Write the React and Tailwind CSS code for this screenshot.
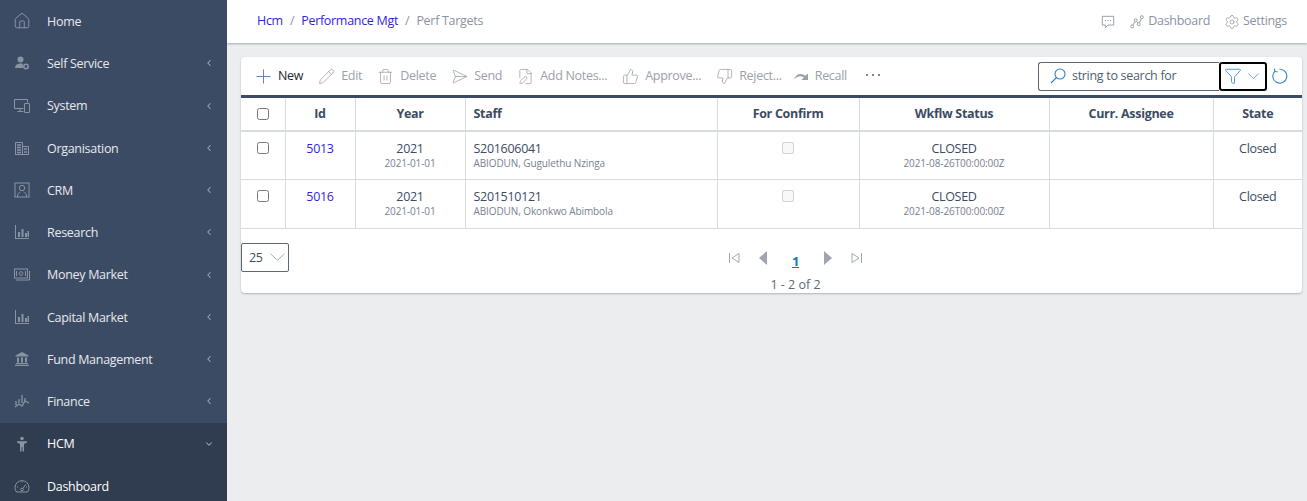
import { Pencil, Trash2, SendHorizontal, FilePen, ThumbsUp, ThumbsDown, Funnel, ChevronLeft, Settings, Home } from 'lucide-react'

function UserGear(props) {
  return (
    <svg viewBox="0 0 16 16" fill="currentColor" {...props}>
      <circle cx="6.500" cy="4.500" r="3"/>
      <path d="M1 13c0-3 2-4.500 5.500-4.500 1 0 1.700.1 2.300.4v4.100z"/>
      <circle cx="12" cy="11.500" r="2.200" fill="none" stroke="currentColor" strokeWidth="1.600"/>
    </svg>
  )
}

function Devices(props) {
  return (
    <svg viewBox="0 0 16 16" fill="none" stroke="currentColor" strokeWidth="1" {...props}>
      <path d="M9.500 10.500H.5v-9h13v3"/>
      <path d="M6 10.500v3M3.500 13.500h6"/>
      <rect x="10.500" y="5.500" width="5" height="9" rx=".5"/>
    </svg>
  )
}

function Building(props) {
  return (
    <svg viewBox="0 0 16 16" fill="none" stroke="currentColor" {...props}>
      <path d="M1.500 14.500V2.500h7v12zM8.500 6.500h6v8h-6M1 14.500h14" strokeWidth="1"/>
      <path d="M3 5h4M3 7.500h4M3 10h4M3 12.500h4M10 9h3M10 12h3" strokeWidth="1.300"/>
    </svg>
  )
}

function Contact(props) {
  return (
    <svg viewBox="0 0 16 16" fill="none" stroke="currentColor" strokeWidth="1" {...props}>
      <rect x="1" y="1" width="14" height="14"/>
      <circle cx="8" cy="6" r="2.700"/>
      <path d="M3.500 15c0-3 1-4.500 3-5M12.500 15c0-3-1-4.500-3-5"/>
    </svg>
  )
}

function Bars(props) {
  return (
    <svg viewBox="0 0 16 16" fill="currentColor" {...props}>
      <path d="M1 1h1v13h13v1H1z"/>
      <path d="M4 8h2v5H4zM7.500 5h2v8h-2zM11 9h2v4h-2zM13.500 7h1.500v6h-1.500z"/>
    </svg>
  )
}

function Money(props) {
  return (
    <svg viewBox="0 0 16 16" fill="none" stroke="currentColor" strokeWidth="1" {...props}>
      <rect x=".5" y="2" width="13" height="9"/>
      <circle cx="7" cy="6.500" r="1.800"/>
      <path d="M2.500 4v5M11.500 4v5M15.500 4v9H2" />
    </svg>
  )
}

function Bank(props) {
  return (
    <svg viewBox="0 0 16 16" fill="currentColor" {...props}>
      <path d="M8 1l6.500 3.500v1h-13v-1z"/>
      <path d="M3 6.500h2v5H3zM7 6.500h2v5H7zM11 6.500h2v5h-2z"/>
      <path d="M2 12h12v1H2zM1 13.800h14V15H1z"/>
    </svg>
  )
}

function Trend(props) {
  return (
    <svg viewBox="0 0 16 16" fill="none" stroke="currentColor" strokeWidth="1.300" {...props}>
      <path d="M2 8v4M5 6v4M8 2v8M11 5v3"/>
      <path d="M1 14l4-3 3 2 3-5 4 2"/>
    </svg>
  )
}

function Person(props) {
  return (
    <svg viewBox="0 0 16 16" fill="currentColor" {...props}>
      <circle cx="8" cy="2.500" r="1.800"/>
      <path d="M3 5.200h10v1.400L10 8v7.500H8.500V11h-1v4.500H6V8L3 6.600z"/>
    </svg>
  )
}

function Speedometer(props) {
  return (
    <svg viewBox="0 0 16 16" fill="none" stroke="currentColor" strokeWidth="1" {...props}>
      <path d="M2.500 14A7 7 0 1 1 13.500 14z"/>
      <circle cx="8" cy="11.500" r="1.300"/>
      <path d="M9 10.500l2.500-4M3 9h1M12 9h1M8 3.500v1"/>
    </svg>
  )
}

function Recall(props) {
  return (
    <svg viewBox="0 0 16 16" fill="currentColor" {...props}>
      <path d="M0 11.500C1 8 3.500 6 6.500 6c2 0 3.500.8 4.800 1.800L14 5.500v6.500H7.500l2.300-2.500C8.800 8.700 7.700 8.300 6.500 8.300c-2.300 0-4.500 1.200-6.500 3.200z"/>
    </svg>
  )
}

function Graph(props) {
  return (
    <svg viewBox="0 0 16 16" fill="none" stroke="currentColor" strokeWidth="1" {...props}>
      <circle cx="2.500" cy="13" r="1.700"/>
      <circle cx="6.500" cy="6" r="1.700"/>
      <circle cx="10" cy="10.500" r="1.700"/>
      <circle cx="13.500" cy="2.500" r="1.700"/>
      <path d="M3.300 11.500l2.400-4M7.600 7.400l1.300 1.700M10.700 9l2.200-5"/>
    </svg>
  )
}

function Comment(props) {
  return (
    <svg viewBox="0 0 16 16" fill="none" stroke="currentColor" strokeWidth="1" {...props}>
      <path d="M1.500 1.500h13v10H8l-3 3v-3H1.500z"/>
      <path d="M4.500 6.500h1M7.500 6.500h1M10.500 6.500h1" strokeWidth="1.500"/>
    </svg>
  )
}

function Cross(props) {
  return (
    <svg viewBox="0 0 16 16" fill="none" stroke="currentColor" strokeWidth="1" {...props}>
      <path d="M8 .5v15M.5 8h15"/>
    </svg>
  )
}

function Caret(props) {
  return (
    <svg viewBox="0 0 16 8" fill="none" stroke="currentColor" strokeWidth="1" {...props}>
      <path d="M.5 .5L8 7.500 15.500 .5"/>
    </svg>
  )
}

function Magnifier(props) {
  return (
    <svg viewBox="0 0 16 16" fill="none" stroke="currentColor" strokeWidth="1.100" {...props}>
      <circle cx="10" cy="6" r="5"/>
      <path d="M6.500 9.500L1 15"/>
    </svg>
  )
}

function Refresh(props) {
  return (
    <svg viewBox="0 0 16 16" fill="none" stroke="currentColor" strokeWidth="1.100" {...props}>
      <path d="M7.500 1.200A7 7 0 1 1 2.800 3.300"/>
      <path d="M2.500 .8l.3 2.800 2.800.2"/>
    </svg>
  )
}

function Dots(props) {
  return (
    <svg viewBox="0 0 14 4" fill="currentColor" {...props}>
      <circle cx="1" cy="2" r=".9"/>
      <circle cx="7" cy="2" r=".9"/>
      <circle cx="13" cy="2" r=".9"/>
    </svg>
  )
}

const MENU = [
  { label: 'Home', icon: Home, lucide: true },
  { label: 'Self Service', icon: UserGear, arrow: true },
  { label: 'System', icon: Devices, arrow: true },
  { label: 'Organisation', icon: Building, arrow: true },
  { label: 'CRM', icon: Contact, arrow: true },
  { label: 'Research', icon: Bars, arrow: true },
  { label: 'Money Market', icon: Money, arrow: true },
  { label: 'Capital Market', icon: Bars, arrow: true },
  { label: 'Fund Management', icon: Bank, arrow: true },
  { label: 'Finance', icon: Trend, arrow: true },
]

const ACTIONS = [
  { label: 'Edit', icon: Pencil },
  { label: 'Delete', icon: Trash2 },
  { label: 'Send', icon: SendHorizontal },
  { label: 'Add Notes...', icon: FilePen },
  { label: 'Approve...', icon: ThumbsUp },
  { label: 'Reject...', icon: ThumbsDown },
]

const ROWS = [
  { id: 5013, staff: 'S201606041', name: 'ABIODUN, Gugulethu Nzinga' },
  { id: 5016, staff: 'S201510121', name: 'ABIODUN, Okonkwo Abimbola' },
]

const TH = 'border-l border-[#d8dbe0] font-bold text-[#3c4b64] h-[33px] p-0'
const TD = 'border-l border-[#d8dbe0] align-top p-0 pt-[8px]'
const SUB = 'text-[10px] leading-[13px] tracking-[-0.1px] text-[#768192]'

function MenuItem({ item }) {
  const Icon = item.icon
  return (
    <div className="h-[42.25px] flex items-center pl-[14px] pr-[13px]">
      {item.lucide
        ? <Icon className="w-[18px] h-[18px] -mx-px text-[#8a93a2] shrink-0" strokeWidth={1.300} />
        : <Icon className="w-[16px] h-[16px] text-[#8a93a2] shrink-0" />}
      <span className="ml-[17px] mt-[2px] flex-1 text-[#e6e9ee]">{item.label}</span>
      {item.arrow && <ChevronLeft className="w-[10px] h-[10px] text-[#a3abb8]" strokeWidth={2.500} />}
    </div>
  )
}

export default function App() {
  return (
    <div className="h-screen flex overflow-hidden bg-[#ebedef] text-[12.5px] tracking-[-0.3px] text-[#3c4b64] font-['Open_Sans',sans-serif]">

      {/* Sidebar */}
      <aside className="w-[227px] shrink-0 bg-[#3c4b64] overflow-hidden">
        {MENU.map(m => <MenuItem key={m.label} item={m} />)}
        <div className="bg-[#303c50]">
          <div className="h-[42.25px] flex items-center pl-[14px] pr-[13px]">
            <Person className="w-[16px] h-[16px] text-[#8a93a2] shrink-0" />
            <span className="ml-[17px] mt-[2px] flex-1 text-white">HCM</span>
            <ChevronLeft className="w-[10px] h-[10px] -rotate-90 text-[#a3abb8]" strokeWidth={2.500} />
          </div>
          <div className="h-[42.25px] flex items-center pl-[14px] pr-[13px]">
            <Speedometer className="w-[16px] h-[16px] text-[#8a93a2] shrink-0" />
            <span className="ml-[17px] mt-[2px] flex-1 text-white">Dashboard</span>
          </div>
        </div>
      </aside>

      <div className="flex-1 min-w-0 flex flex-col">

        {/* Top bar */}
        <header className="h-[43px] shrink-0 bg-white shadow-[0_1px_2px_rgba(60,75,100,0.4)] flex items-center pl-[30px] pr-[20px]">
          <a className="text-[#321fdb]">Hcm</a>
          <span className="mx-[7px] text-[#8a93a2]">/</span>
          <a className="text-[#321fdb]">Performance Mgt</a>
          <span className="mx-[7px] text-[#8a93a2]">/</span>
          <span className="text-[#8a93a2]">Perf Targets</span>
          <div className="ml-auto flex items-center text-[#8a93a2]">
            <Comment className="w-[14px] h-[14px]" />
            <Graph className="ml-[15px] w-[14px] h-[14px]" />
            <span className="ml-[4px]">Dashboard</span>
            <Settings className="ml-[14px] w-[16px] h-[16px] -mx-px" strokeWidth={1.100} />
            <span className="ml-[4px]">Settings</span>
          </div>
        </header>

        {/* Card */}
        <main className="flex-1 pt-[14px] pl-[14px] pr-[5px]">
          <div className="bg-white rounded-[4px] shadow-[0_1px_2px_rgba(60,75,100,0.35)]">

            <div className="h-[38px] flex items-center pl-[15px] pr-[14px]">
              <Cross className="w-[15px] h-[15px] text-[#5b7fa8]" />
              <span className="ml-[7px] mr-[16px] text-[#23282c]">New</span>
              {ACTIONS.map(a => {
                const Icon = a.icon
                return (
                  <div key={a.label} className="flex items-center mr-[16px] text-[#9aa1ac]">
                    <Icon className="w-[17px] h-[17px] -mx-px" strokeWidth={1.100} />
                    <span className="ml-[7px]">{a.label}</span>
                  </div>
                )
              })}
              <Recall className="-ml-[4px] w-[16px] h-[16px] text-[#9aa1ac]" />
              <span className="ml-[5px] text-[#9aa1ac]">Recall</span>
              <Dots className="ml-[19px] w-[14px] h-[4px] -mt-[2px] text-[#3c4b64]" />

              <div className="ml-auto flex items-center">
                <div className="w-[181px] h-[29px] border border-[#5c6873] border-r-0 rounded-l-[3px] flex items-center pl-[11px]">
                  <Magnifier className="w-[16px] h-[16px] text-[#2f80d0]" />
                  <span className="ml-[6px] text-[#4f5d73]">string to search for</span>
                </div>
                <div className="w-[48px] h-[29px] border-2 border-black rounded-[3px] flex items-center pl-[3px]">
                  <Funnel className="w-[18px] h-[18px] text-[#2f80d0]" strokeWidth={1.100} />
                  <Caret className="ml-[6px] w-[11px] h-[6px] text-[#2f80d0]" />
                </div>
                <Refresh className="ml-[5px] w-[16px] h-[16px] text-[#2f80d0]" />
              </div>
            </div>

            <div className="border-t-[3px] border-[#3c4b64]">
              <table className="w-full table-fixed border-collapse">
                <colgroup>
                  <col className="w-[44px]" />
                  <col className="w-[70px]" />
                  <col className="w-[110px]" />
                  <col className="w-[252px]" />
                  <col className="w-[142px]" />
                  <col className="w-[190px]" />
                  <col className="w-[164px]" />
                  <col className="w-[89px]" />
                </colgroup>
                <thead>
                  <tr className="border-b-2 border-[#d8dbe0]">
                    <th className="h-[33px] p-0"><input type="checkbox" className="block mx-auto w-[12px] h-[12px]" /></th>
                    <th className={TH}>Id</th>
                    <th className={TH}>Year</th>
                    <th className={`${TH} text-left pl-[8px]`}>Staff</th>
                    <th className={TH}>For Confirm</th>
                    <th className={TH}>Wkflw Status</th>
                    <th className={TH}>Curr. Assignee</th>
                    <th className={TH}>State</th>
                  </tr>
                </thead>
                <tbody>
                  {ROWS.map(r => (
                    <tr key={r.id} className="h-[48.5px] border-b border-[#d8dbe0]">
                      <td className="align-top p-0 pt-[10px]"><input type="checkbox" className="block mx-auto w-[12px] h-[12px]" /></td>
                      <td className={`${TD} text-center text-[#321fdb]`}>{r.id}</td>
                      <td className={`${TD} text-center`}>
                        <div className="leading-[17px]">2021</div>
                        <div className={SUB}>2021-01-01</div>
                      </td>
                      <td className={`${TD} pl-[8px]`}>
                        <div className="leading-[17px]">{r.staff}</div>
                        <div className={SUB}>{r.name}</div>
                      </td>
                      <td className={`${TD} text-center`}>
                        <input type="checkbox" disabled className="block mx-auto mt-[2px] w-[12px] h-[12px]" />
                      </td>
                      <td className={`${TD} text-center`}>
                        <div className="leading-[17px]">CLOSED</div>
                        <div className={SUB}>2021-08-26T00:00:00Z</div>
                      </td>
                      <td className={TD}></td>
                      <td className={`${TD} text-center`}>Closed</td>
                    </tr>
                  ))}
                </tbody>
              </table>
            </div>

            {/* Pager */}
            <div className="h-[64px] flex pt-[14px]">
              <div className="w-[48px] h-[29px] border border-[#5c6873] rounded-[2px] flex items-center pl-[7px] text-[#3c4b64]">
                <span className="mt-[2px]">25</span>
                <Caret className="ml-[7px] w-[15px] h-[8px] text-[#a0a6b1]" />
              </div>
              <div className="flex-1 flex flex-col items-center">
                <div className="flex items-center shrink-0 h-[30px] text-[#a0a6b1]">
                  <svg viewBox="0 0 12 12" className="w-[12px] h-[12px]" fill="none" stroke="currentColor"><path d="M1.500 1v10M11 1.500L4 6l7 4.500z"/></svg>
                  <svg viewBox="0 0 10 14" className="ml-[18px] w-[10px] h-[14px]" fill="currentColor"><path d="M9 0v14L1 7z"/></svg>
                  <span className="mx-[24px] mt-[8px] text-[13px] font-bold text-[#0b78c8] underline">1</span>
                  <svg viewBox="0 0 10 14" className="mr-[18px] w-[10px] h-[14px]" fill="currentColor"><path d="M1 0v14l8-7z"/></svg>
                  <svg viewBox="0 0 12 12" className="w-[12px] h-[12px]" fill="none" stroke="currentColor"><path d="M10.500 1v10M1 1.500L8 6l-7 4.500z"/></svg>
                </div>
                <div className="mt-[3px] shrink-0 tracking-normal text-[#5c6873]">1 - 2 of 2</div>
              </div>
            </div>
          </div>
        </main>
      </div>
    </div>
  )
}
